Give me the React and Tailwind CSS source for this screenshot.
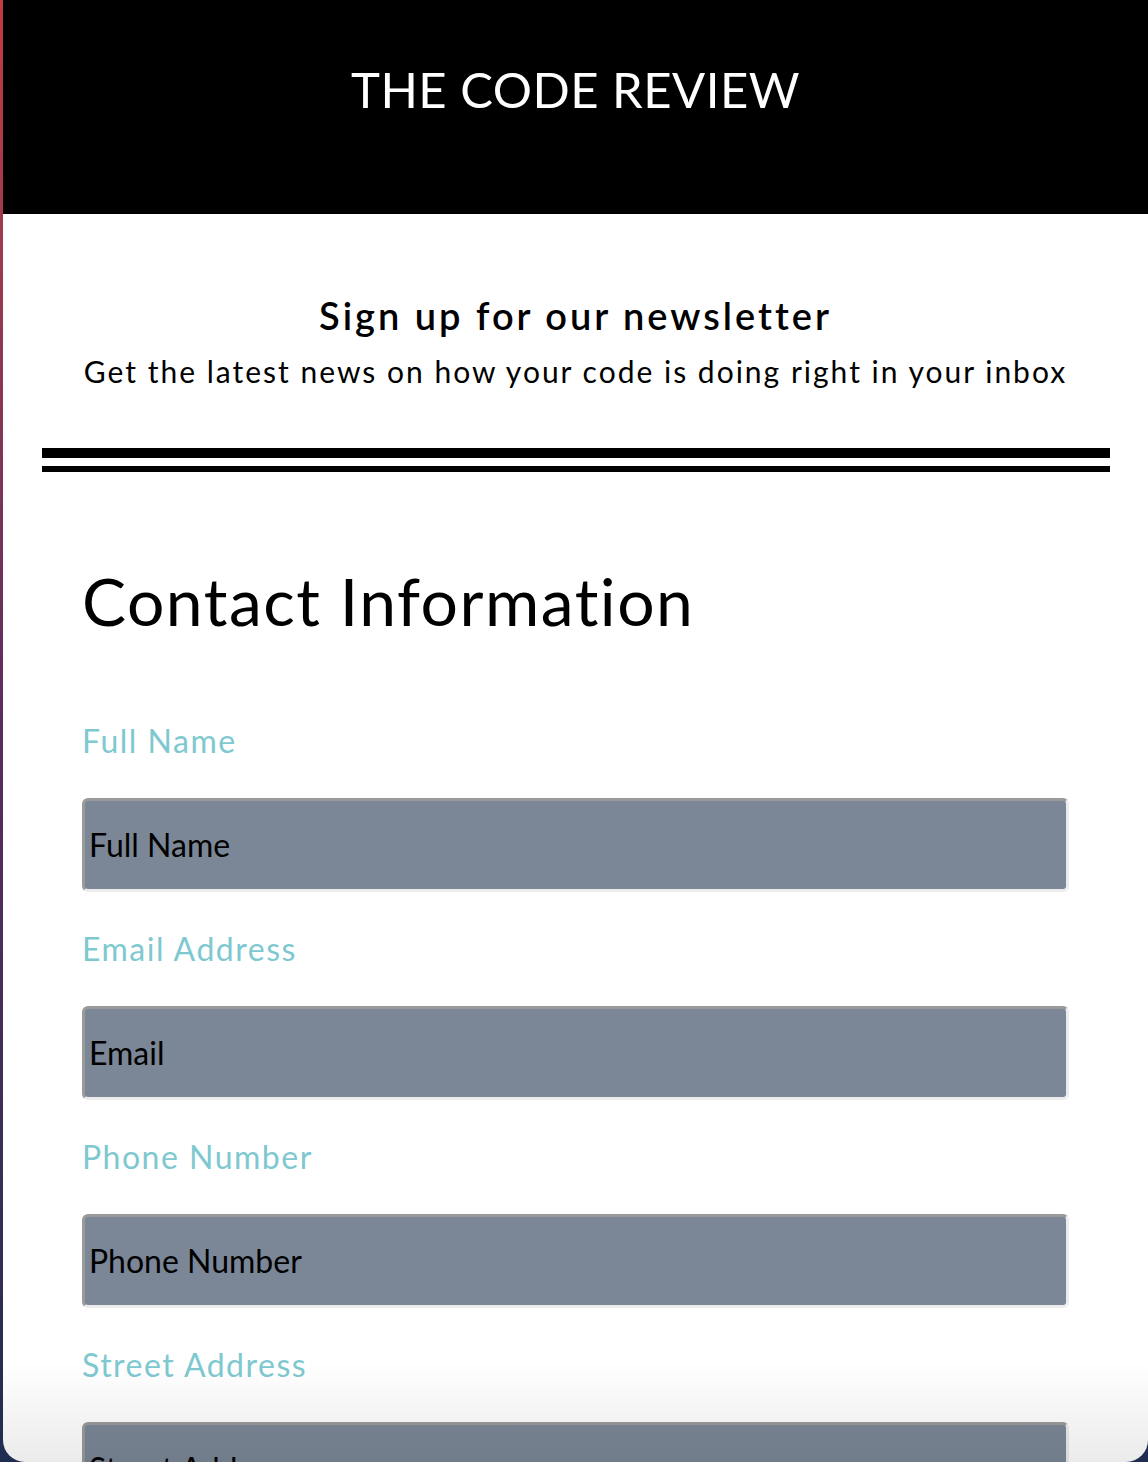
import React from "react";

const fields = [
  { label: "Full Name", placeholder: "Full Name" },
  { label: "Email Address", placeholder: "Email" },
  { label: "Phone Number", placeholder: "Phone Number" },
  { label: "Street Address", placeholder: "Street Address" },
];

export default function App() {
  return (
    <div
      className="h-[1462px] w-full overflow-hidden bg-gradient-to-b from-[#c23b3f] via-[#5b2c5e] to-[#1e2d50] pl-[3px]"
      style={{ fontFamily: "Lato, 'Noto Sans', sans-serif" }}
    >
      <div className="relative h-full overflow-hidden rounded-b-[22px] bg-white">
        <header className="h-[214px] bg-black pt-[59px] text-center">
          <h1 className="text-[49px] font-normal leading-[60px] text-white tracking-[0.5px]">
            THE CODE REVIEW
          </h1>
        </header>

        <section className="pt-[79px] text-center text-black">
          <h2 className="text-[38px] font-semibold leading-[44px] tracking-[3px]">
            Sign up for our newsletter
          </h2>
          <p className="mt-[14px] text-[30px] leading-[40px] tracking-[2px]">
            Get the latest news on how your code is doing right in your inbox
          </p>
        </section>

        <div className="ml-[39px] mr-[38px] mt-[57px]">
          <div className="h-[10px] bg-black" />
          <div className="mt-[8px] h-[6px] bg-black" />
        </div>

        <form className="pl-[79px] pr-[80px]">
          <h2 className="mt-[89px] text-[66px] leading-[80px] text-black tracking-[1.5px]">
            Contact Information
          </h2>
          <div className="mt-[80px] flex flex-col">
            {fields.map((f) => (
              <div key={f.label} className="mb-[37px] flex flex-col">
                <label className="text-[32px] leading-[40px] text-[#7ec8d0] tracking-[1.5px]">
                  {f.label}
                </label>
                <div className="mt-[37px] flex h-[94px] w-[987px] items-center rounded-[6px] border-[3px] border-t-[#9a9a9a] border-l-[#9a9a9a] border-r-[#ececec] border-b-[#ececec] bg-[#7b8797] pl-[4px] text-[32px] text-black">
                  {f.placeholder}
                </div>
              </div>
            ))}
          </div>
        </form>

        <div className="pointer-events-none absolute bottom-0 left-0 right-0 h-[100px] bg-gradient-to-b from-transparent to-black/[0.08]" />
      </div>
    </div>
  );
}
